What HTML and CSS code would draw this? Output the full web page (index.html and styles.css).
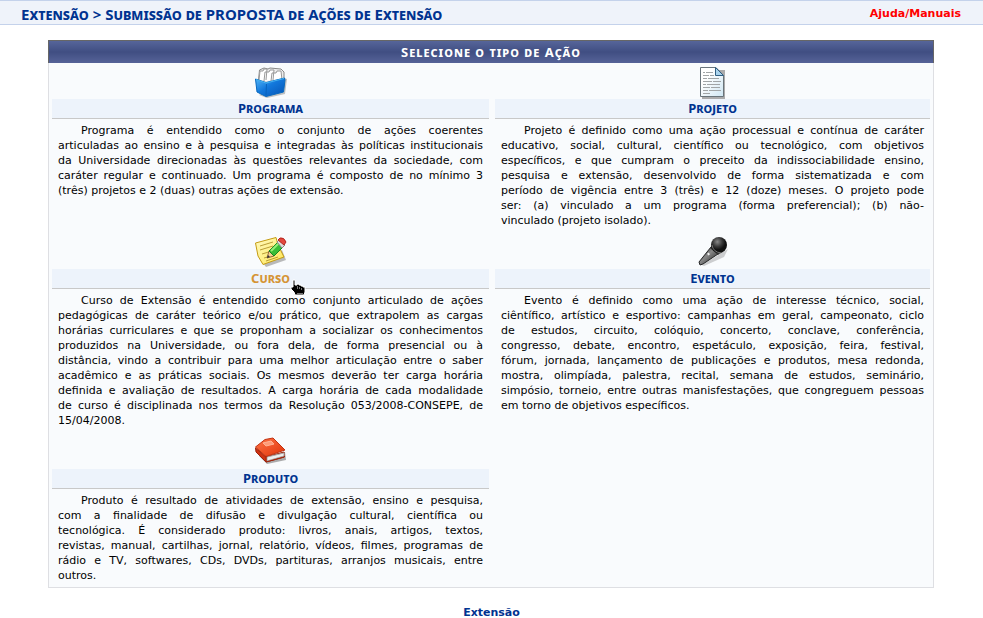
FILE: index.html
```html
<!DOCTYPE html>
<html lang="pt-BR">
<head>
<meta charset="utf-8">
<title>Submissão de Proposta de Ações de Extensão</title>
<link rel="stylesheet" href="styles.css">
</head>
<body>
<header class="topbar">
  <h1 class="page-title"><a href="#">Extensão</a> &gt; Submissão de PROPOSTA de Ações de Extensão</h1>
  <a class="help" href="#">Ajuda/Manuais</a>
</header>
<main class="panel">
  <h2 class="caption">Selecione o tipo de Ação</h2>
  <div class="actions">
    <section class="action">
      <a class="icon" href="#" aria-label="Programa">
        <svg width="34" height="32" viewBox="0 0 34 32">
          <defs>
            <linearGradient id="box" x1="0" y1="0" x2="1" y2="1"><stop offset="0" stop-color="#56b8f8"/><stop offset=".45" stop-color="#1278dc"/><stop offset="1" stop-color="#0553b4"/></linearGradient>
          </defs>
          <path d="M5 28 13 31 31 27 33 12 30 11z" fill="#777" opacity=".45"/>
          <path d="M4.500 13 5.500 3 10 1 14 2 16 1 27 2 30 5 30 13 12 17z" fill="#ececec" stroke="#888"/>
          <path d="M5 13 6 4h3l1-2h3l-1 11M10 14l1-9h4l1-2h4l-1 10M17 14l1-8h4l1-2h4l1 9" fill="#fff" stroke="#999"/>
          <path d="M1.500 12 12 15.500 30.500 11 31 13 29.500 25 12 29.500 3 25z" fill="url(#box)" stroke="#0869bf"/>
          <path d="M2 12.500 12 16 30 11.500" fill="none" stroke="#45b4f4"/>
          <path d="M12.500 17 12 28" stroke="#0863bd"/>
        </svg>
      </a>
      <h3 class="name"><a href="#">Programa</a></h3>
      <p class="text">Programa é entendido como o conjunto de ações coerentes articuladas&nbsp;ao ensino e à pesquisa e integradas às políticas institucionais da&nbsp;Universidade direcionadas às questões relevantes da sociedade, com caráter regular e continuado. Um programa é composto de no mínimo 3 (três) projetos e 2 (duas) outras ações de extensão.</p>
    </section>
    <section class="action">
      <a class="icon" href="#" aria-label="Projeto">
        <svg width="34" height="32" viewBox="0 0 34 32">
          <defs><linearGradient id="page" x1="0" y1="0" x2="1" y2="1"><stop offset=".3" stop-color="#fff"/><stop offset="1" stop-color="#cfe6f3"/></linearGradient></defs>
          <path d="M6 3h23v29H6z" fill="#777" opacity=".6"/>
          <path d="M4.500.5H20L27.500 8.500v21h-23z" fill="url(#page)" stroke="#69747b"/>
          <path d="M19.500.5 27.500 8.500h-8z" fill="#a9d3ed" stroke="#315f82"/>
          <path d="M7 5.500h2m1 0h7M7 8.500h6m1 0h4M7 11.500h4m1 0h11M7 14.500h9m1 0h8M7 17.500h3m1 0h13M7 20.500h7m1 0h9M7 23.500h5m1 0h12M7 26.500h7" stroke="#a1a5a7" fill="none"/>
        </svg>
      </a>
      <h3 class="name"><a href="#">Projeto</a></h3>
      <p class="text">Projeto é definido como uma ação processual e contínua de caráter educativo, social, cultural, científico ou tecnológico, com objetivos específicos, e que cumpram o preceito da indissociabilidade ensino, pesquisa e extensão, desenvolvido de forma sistematizada e com período&nbsp;de vigência entre 3 (três) e 12 (doze) meses. O projeto pode ser:&nbsp;(a)&nbsp;vinculado a um programa (forma preferencial); (b) não-vinculado&nbsp;(projeto isolado).</p>
    </section>
    <section class="action">
      <a class="icon" href="#" aria-label="Curso">
        <svg width="34" height="32" viewBox="0 0 34 32">
          <defs><linearGradient id="note" x1="0" y1="0" x2="1" y2="1"><stop offset="0" stop-color="#fffac0"/><stop offset="1" stop-color="#ffe653"/></linearGradient></defs>
          <path d="M9 26 12 30 32 23 28 13z" fill="#777" opacity=".5"/>
          <path d="M1.500 6 22 .5 24 8 30 20 9 27.500 4 19z" fill="url(#note)" stroke="#c49b13"/>
          <path d="M6 9 19 5M6 13 19 9M8 17 18 14M10 21 17 19M12 24 24 20" stroke="#b99d37"/>
          <path d="M13 21 15 14 20 19z" fill="#f6cf92" stroke="#8e6539"/>
          <path d="M13 21 14 18 16 20z" fill="#333"/>
          <path d="M15 14 24 5 29 10 20 19z" fill="#38bd36" stroke="#168621"/>
          <path d="M17 14 25 6" stroke="#93ee75" stroke-width="2"/>
          <path d="M23 5 25 3 31 8 28 11z" fill="#ddd" stroke="#888"/>
          <path d="M24 3 26 1Q30 0 32 5L30 8z" fill="#e3483e" stroke="#b72721"/>
        </svg>
      </a>
      <h3 class="name active"><a href="#">Curso</a>
        <svg class="pointer" width="16" height="17" viewBox="0 0 16 17" aria-hidden="true">
          <path d="M3 1h2v5h2V5h2v1h2v1h2v1h2v5l-1 3H5L4 13 1 10V8h2z" fill="#000" stroke="#fff"/>
          <path d="M7.500 7v3m2-2v2m2-1v2M7 14.500h6" stroke="#777" fill="none"/>
        </svg>
      </h3>
      <p class="text">Curso de Extensão é entendido como conjunto articulado de ações pedagógicas de caráter teórico e/ou prático, que extrapolem as cargas horárias curriculares e que se proponham a socializar os conhecimentos produzidos na Universidade, ou fora dela, de forma presencial ou à distância, vindo a contribuir para uma melhor articulação entre o saber acadêmico e as práticas sociais. Os mesmos deverão ter carga horária definida e avaliação de resultados. A carga horária de cada modalidade de&nbsp;curso é disciplinada nos termos da Resolução 053/2008-CONSEPE, de 15/04/2008.</p>
    </section>
    <section class="action">
      <a class="icon" href="#" aria-label="Evento">
        <svg width="34" height="32" viewBox="0 0 34 32">
          <defs>
            <linearGradient id="mic" x1="0" y1="0" x2="1" y2="1"><stop offset="0" stop-color="#222"/><stop offset=".45" stop-color="#888"/><stop offset="1" stop-color="#111"/></linearGradient>
            <radialGradient id="head" cx=".4" cy=".3"><stop offset="0" stop-color="#888"/><stop offset=".6" stop-color="#393939"/><stop offset="1" stop-color="#111"/></radialGradient>
          </defs>
          <path d="M6 28 19 20 32 12 28 20 8 29z" fill="#777" opacity=".35"/>
          <path d="M15 10 22 17 7 27 4 28 3 25z" fill="url(#mic)" stroke="#252525"/>
          <path d="M14 11 17 7 26 15 22 18z" fill="#333"/>
          <circle cx="23" cy="8" r="8" fill="url(#head)"/>
          <path d="M16 8Q17 15 25 16" stroke="#777" fill="none"/>
          <path d="M12 16 13 18" stroke="#eee" stroke-width="2"/>
        </svg>
      </a>
      <h3 class="name"><a href="#">Evento</a></h3>
      <p class="text">Evento é definido como uma ação de interesse técnico, social, ciêntífico, artístico e esportivo: campanhas em geral, campeonato, ciclo de&nbsp;estudos, circuito, colóquio, concerto, conclave, conferência, congresso,&nbsp;debate, encontro, espetáculo, exposição, feira, festival, fórum,&nbsp;jornada, lançamento de publicações e produtos, mesa redonda, mostra,&nbsp;olimpíada, palestra, recital, semana de estudos, seminário, simpósio,&nbsp;torneio, entre outras manisfestações, que congreguem pessoas em&nbsp;torno de objetivos específicos.</p>
    </section>
    <section class="action">
      <a class="icon" href="#" aria-label="Produto">
        <svg width="34" height="32" viewBox="0 0 34 32">
          <defs><linearGradient id="cover" x1="0" y1="0" x2="1" y2="1"><stop offset="0" stop-color="#ff7547"/><stop offset="1" stop-color="#df3209"/></linearGradient></defs>
          <path d="M5 19 13 27 32 23 31 15z" fill="#777" opacity=".6"/>
          <path d="M1.500 11 12 20 30 15 30.500 20 12 25 2 15z" fill="#cf3212" stroke="#9c230d"/>
          <path d="M13 20 30 16 30 19 13 24z" fill="#eee" stroke="#aaa"/>
          <path d="M1.500 10 11 2.500 19 1 31 13 12 19.500z" fill="url(#cover)" stroke="#c23211"/>
          <path d="M9 6 17 4 20 7 12 9z" fill="#ff9b78" stroke="#ffb394"/>
          <path d="M12 19.500V25L30 20" fill="none" stroke="#9f270f"/>
        </svg>
      </a>
      <h3 class="name"><a href="#">Produto</a></h3>
      <p class="text">Produto é resultado de atividades de extensão, ensino e pesquisa, com&nbsp;a finalidade de difusão e divulgação cultural, científica ou tecnológica.&nbsp;É considerado produto: livros, anais, artigos, textos, revistas,&nbsp;manual, cartilhas, jornal, relatório, vídeos, filmes, programas de rádio&nbsp;e TV, softwares, CDs, DVDs, partituras, arranjos musicais, entre outros.&nbsp;</p>
    </section>
  </div>
</main>
<footer class="footer"><a href="#">Extensão</a></footer>
</body>
</html>
```
FILE: styles.css
```css
* { box-sizing: border-box; }
body {
  margin: 0;
  background: #fff;
  color: #000;
  font: 11px/15px "DejaVu Sans", Verdana, sans-serif;
}
a { color: #003390; text-decoration: none; }
h1, h2, h3, p { margin: 0; }
.topbar {
  display: flex;
  align-items: center;
  justify-content: space-between;
  height: 25px;
  padding: 2px 22px 0 21px;
  background: #eff3fa;
  border: solid #c4d2eb;
  border-width: 1px 0;
}
.page-title {
  color: #003390;
  font-family: "Noto Sans", Verdana, sans-serif;
  font-size: 15px;
  line-height: 20px;
  font-variant: small-caps;
}
.help { color: #f00; font-weight: bold; }
.panel {
  margin: 15px 49px 0 48px;
  background: #f9fbfd;
  border: 1px solid #dedfe3;
  border-top: 0;
}
.caption {
  margin: 0 -1px;
  border: solid #666;
  border-width: 1px 1px 0;
  background: linear-gradient(#56659a, #404e82 50%, #566398);
  color: #fff;
  font-family: "Noto Sans", Verdana, sans-serif;
  font-size: 13px;
  line-height: 22px;
  letter-spacing: 1px;
  font-variant: small-caps;
  text-align: center;
}
.actions {
  display: grid;
  grid-template-columns: 437fr 435fr;
  gap: 6px;
  padding: 1px 3px 4px;
}
.icon { display: flex; justify-content: center; height: 35px; padding-top: 3px; }
.name {
  position: relative;
  background: #edf3fb;
  border-bottom: 1px solid #c8c8c8;
  color: #003390;
  font-family: "Noto Sans", Verdana, sans-serif;
  font-size: 13px;
  line-height: 19px;
  font-variant: small-caps;
  text-align: center;
}
.active a { color: #d59435; }
.pointer { position: absolute; top: 10px; left: calc(50% + 19px); }
.text { padding: 4px 6px 0; text-align: justify; text-indent: 23px; }
.footer { padding-top: 17px; text-align: center; font-weight: bold; }
```
